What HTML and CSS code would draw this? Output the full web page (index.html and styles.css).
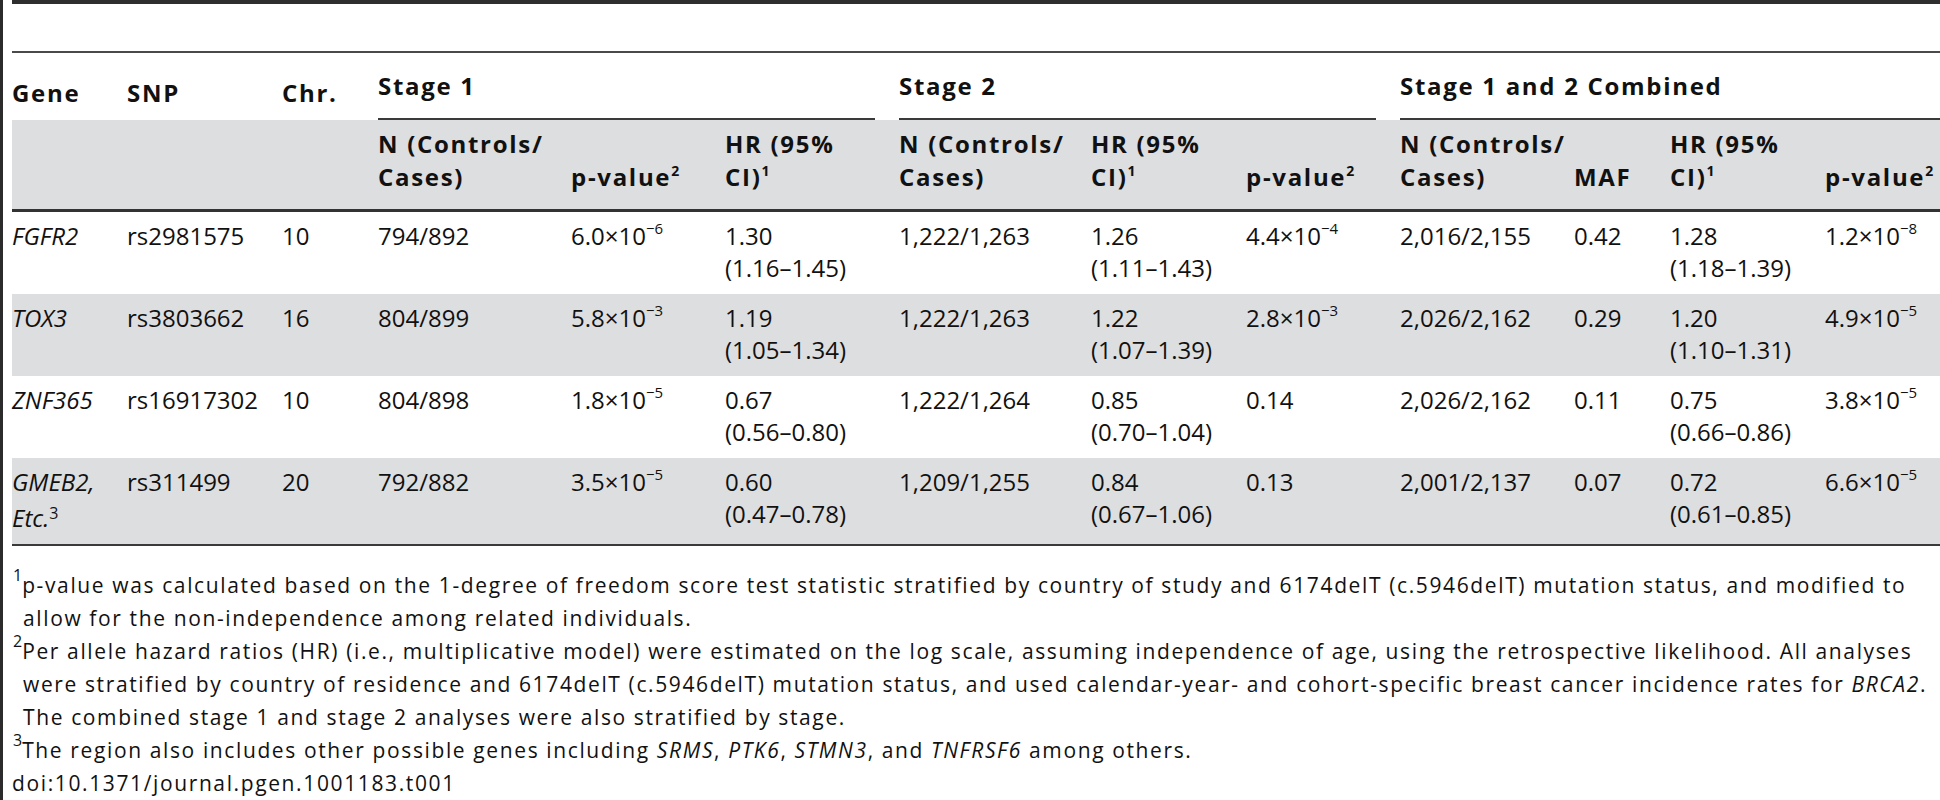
FILE: index.html
```html
<!DOCTYPE html>
<html>
<head>
    <title>Table 1 - Stage 1 and 2 association results</title>
    <meta charset="UTF-8">
    <link rel="stylesheet" href="styles.css">
</head>
<body>
    <div class="page">
        <div class="caption-space"></div>

        <table class="data">
            <colgroup>
                <col style="width: 115px">
                <col style="width: 155px">
                <col style="width: 96px">
                <col style="width: 193px">
                <col style="width: 154px">
                <col style="width: 174px">
                <col style="width: 192px">
                <col style="width: 155px">
                <col style="width: 154px">
                <col style="width: 174px">
                <col style="width: 96px">
                <col style="width: 155px">
                <col style="width: 115px">
            </colgroup>
            <thead>
                <tr class="head-top">
                    <th>Gene</th>
                    <th>SNP</th>
                    <th>Chr.</th>
                    <th colspan="3" class="group"><div class="group-label">Stage 1</div></th>
                    <th colspan="3" class="group"><div class="group-label">Stage 2</div></th>
                    <th colspan="4" class="group last"><div class="group-label">Stage 1 and 2 Combined</div></th>
                </tr>
                <tr class="head-sub">
                    <th></th>
                    <th></th>
                    <th></th>
                    <th>N (Controls/<br>Cases)</th>
                    <th>p-value<sup class="hnote">2</sup></th>
                    <th>HR (95%<br>CI)<sup class="hnote">1</sup></th>
                    <th>N (Controls/<br>Cases)</th>
                    <th>HR (95%<br>CI)<sup class="hnote">1</sup></th>
                    <th>p-value<sup class="hnote">2</sup></th>
                    <th>N (Controls/<br>Cases)</th>
                    <th>MAF</th>
                    <th>HR (95%<br>CI)<sup class="hnote">1</sup></th>
                    <th class="last">p-value<sup class="hnote">2</sup></th>
                </tr>
            </thead>
            <tbody>
                <tr>
                    <td class="gene">FGFR2</td>
                    <td>rs2981575</td>
                    <td>10</td>
                    <td>794/892</td>
                    <td><span class="sci">6.0×10<sup>−6</sup></span></td>
                    <td>1.30 <span class="ci">(1.16–1.45)</span></td>
                    <td>1,222/1,263</td>
                    <td>1.26 <span class="ci">(1.11–1.43)</span></td>
                    <td><span class="sci">4.4×10<sup>−4</sup></span></td>
                    <td>2,016/2,155</td>
                    <td>0.42</td>
                    <td>1.28 <span class="ci">(1.18–1.39)</span></td>
                    <td class="last"><span class="sci">1.2×10<sup>−8</sup></span></td>
                </tr>
                <tr>
                    <td class="gene">TOX3</td>
                    <td>rs3803662</td>
                    <td>16</td>
                    <td>804/899</td>
                    <td><span class="sci">5.8×10<sup>−3</sup></span></td>
                    <td>1.19 <span class="ci">(1.05–1.34)</span></td>
                    <td>1,222/1,263</td>
                    <td>1.22 <span class="ci">(1.07–1.39)</span></td>
                    <td><span class="sci">2.8×10<sup>−3</sup></span></td>
                    <td>2,026/2,162</td>
                    <td>0.29</td>
                    <td>1.20 <span class="ci">(1.10–1.31)</span></td>
                    <td class="last"><span class="sci">4.9×10<sup>−5</sup></span></td>
                </tr>
                <tr>
                    <td class="gene">ZNF365</td>
                    <td>rs16917302</td>
                    <td>10</td>
                    <td>804/898</td>
                    <td><span class="sci">1.8×10<sup>−5</sup></span></td>
                    <td>0.67 <span class="ci">(0.56–0.80)</span></td>
                    <td>1,222/1,264</td>
                    <td>0.85 <span class="ci">(0.70–1.04)</span></td>
                    <td>0.14</td>
                    <td>2,026/2,162</td>
                    <td>0.11</td>
                    <td>0.75 <span class="ci">(0.66–0.86)</span></td>
                    <td class="last"><span class="sci">3.8×10<sup>−5</sup></span></td>
                </tr>
                <tr>
                    <td class="gene">GMEB2, Etc.<sup class="ref">3</sup></td>
                    <td>rs311499</td>
                    <td>20</td>
                    <td>792/882</td>
                    <td><span class="sci">3.5×10<sup>−5</sup></span></td>
                    <td>0.60 <span class="ci">(0.47–0.78)</span></td>
                    <td>1,209/1,255</td>
                    <td>0.84 <span class="ci">(0.67–1.06)</span></td>
                    <td>0.13</td>
                    <td>2,001/2,137</td>
                    <td>0.07</td>
                    <td>0.72 <span class="ci">(0.61–0.85)</span></td>
                    <td class="last"><span class="sci">6.6×10<sup>−5</sup></span></td>
                </tr>
            </tbody>
        </table>

        <div class="notes">
            <p><sup>1</sup>p-value was calculated based on the 1-degree of freedom score test statistic stratified by country of study and 6174delT (c.5946delT) mutation status, and modified to<br>allow for the non-independence among related individuals.</p>
            <p><sup>2</sup>Per allele hazard ratios (HR) (i.e., multiplicative model) were estimated on the log scale, assuming independence of age, using the retrospective likelihood. All analyses<br>were stratified by country of residence and 6174delT (c.5946delT) mutation status, and used calendar-year- and cohort-specific breast cancer incidence rates for <i>BRCA2</i>.<br>The combined stage 1 and stage 2 analyses were also stratified by stage.</p>
            <p><sup>3</sup>The region also includes other possible genes including <i>SRMS</i>, <i>PTK6</i>, <i>STMN3</i>, and <i>TNFRSF6</i> among others.</p>
            <div class="doi">doi:10.1371/journal.pgen.1001183.t001</div>
        </div>
    </div>
</body>
</html>
```

FILE: styles.css
```css
body {
    margin: 0;
    background: #fff;
    color: #111;
    font-family: "Open Sans", "Liberation Sans", sans-serif;
}
.page {
    border-left: 3px solid #2b2b2b;
    padding-left: 9px;
    min-height: 100vh;
    box-sizing: border-box;
}
.caption-space {
    height: 47px;
    border-top: 4px solid #2e2e2e;
    border-bottom: 2px solid #4a4a4a;
}

/* table */
.data {
    width: 100%;
    table-layout: fixed;
    border-collapse: collapse;
    font-size: 24px;
}
.data th, .data td {
    padding: 0 24px 0 0;
    text-align: left;
}
.data th {
    font-weight: bold;
    line-height: 33px;
    letter-spacing: 1.7px;
    white-space: nowrap;
    vertical-align: bottom;
}
.data .last { padding-right: 0; }

.head-top { height: 67px; }
.head-top th { padding-bottom: 11px; }
.head-top th.group { padding-bottom: 0; }
.group-label {
    padding-bottom: 16px;
    border-bottom: 2px solid #3a3a3a;
}

.head-sub th {
    background: #dddee0;
    padding-top: 7px;
    padding-bottom: 16px;
    border-bottom: 3px solid #333;
}
.hnote {
    font-size: 14px;
    line-height: 0;
    letter-spacing: 0;
    vertical-align: 10px;
}

.data td {
    line-height: 32px;
    padding-top: 8px;
    padding-bottom: 10px;
    vertical-align: top;
}
.data tbody tr:nth-child(even) { background: #dddee0; }
.data tbody tr:last-child td { border-bottom: 2px solid #3a3a3a; }
.gene { font-style: italic; }
.ci { display: block; white-space: nowrap; }
.sci { white-space: nowrap; }
.sci sup {
    font-size: 15px;
    line-height: 0;
    vertical-align: 11px;
}
.ref {
    font-style: normal;
    font-size: 16px;
    line-height: 30px;
    vertical-align: 8px;
}

/* footnotes */
.notes {
    margin-top: 23px;
    font-size: 21px;
    line-height: 33px;
    letter-spacing: 1.62px;
}
.notes p {
    margin: 0;
    padding-left: 11px;
    text-indent: -10px;
}
.notes sup {
    font-size: 16px;
    line-height: 0;
    vertical-align: 12px;
    letter-spacing: 0;
}
```
